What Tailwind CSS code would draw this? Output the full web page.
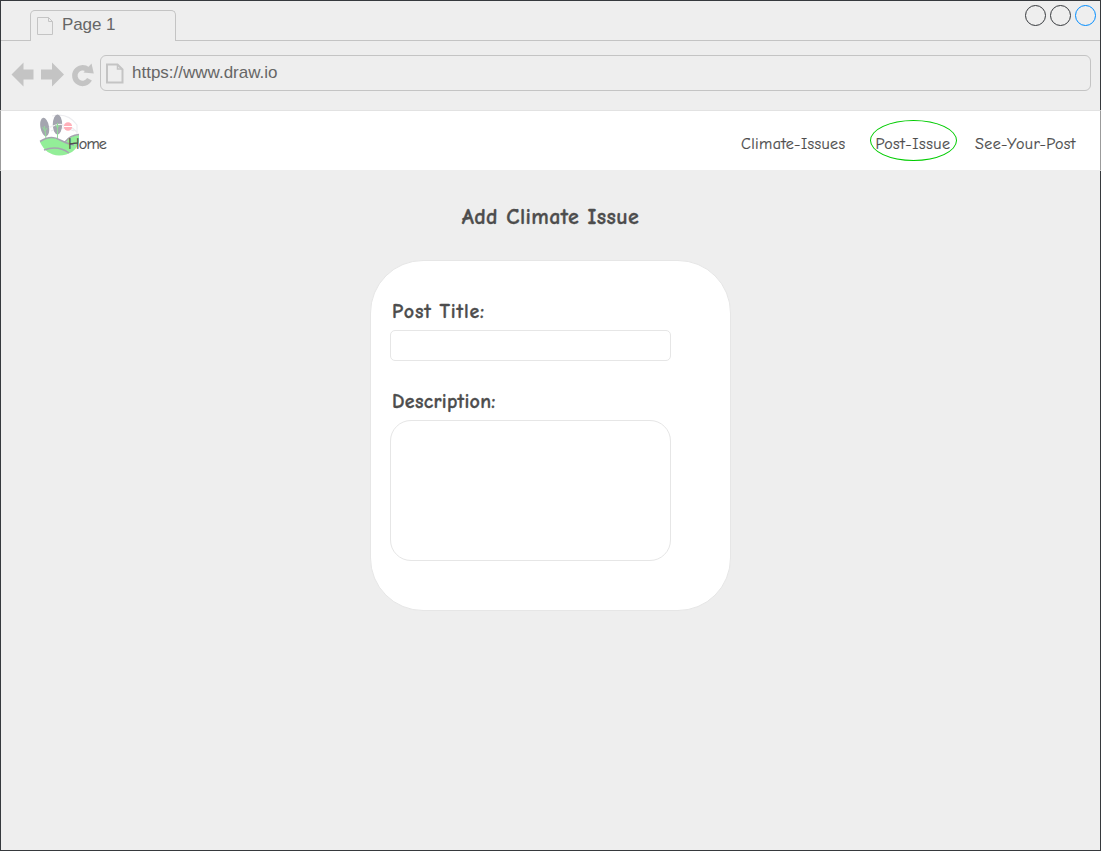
<!DOCTYPE html>
<html lang="en">
<head>
<meta charset="utf-8">
<title>Add Climate Issue</title>
<script src="https://cdn.jsdelivr.net/npm/@tailwindcss/browser@4"></script>
</head>
<body class="w-[1101px] h-[851px] overflow-hidden">
<div class="w-[1101px] h-[851px] bg-[#eeeeee] border border-[#36393d] flex flex-col font-['Liberation_Sans',sans-serif] text-[#666666] text-[17px]">
  <!-- Tab strip -->
  <header class="h-10 shrink-0 border-b border-[#c4c4c4] flex items-end justify-between pl-[29px] pr-1">
    <div class="w-[146px] h-[31px] -mb-px border border-b-0 border-[#c4c4c4] rounded-t-[5px] bg-[#eeeeee] flex pl-[6px]">
      <svg class="w-[17px] h-5 mt-[5px] shrink-0" viewBox="0 0 17 20" fill="none" stroke="#c4c4c4"><path d="M.5 1.500h11l4 4v13H.5zM11.500 1.500v4h4"/></svg>
      <span class="ml-2 mt-[4px] leading-5 tracking-[-0.1px]">Page 1</span>
    </div>
    <div class="flex gap-1 self-start mt-[4px]">
      <span class="size-[21px] rounded-full border border-[#36393d]"></span>
      <span class="size-[21px] rounded-full border border-[#36393d]"></span>
      <span class="size-[21px] rounded-full border border-[#008cff]"></span>
    </div>
  </header>
  <!-- Toolbar -->
  <div class="h-[69px] shrink-0 flex pl-[10px] pr-[9px] pt-[14px]">
    <svg class="w-[83px] h-[26px] mt-[6px] mr-[6px] shrink-0" viewBox="0 0 83 26" fill="#c4c4c4">
      <path d="M0.500 13.500L12.500 1.500V8.500H22.500V18.500H12.500V25.500ZM53 13.500L41 1.500V8.500H30V18.500H41V25.500Z"/>
      <path d="M78.500 18.300A7.800 7.800 0 1 1 76.500 8.500" fill="none" stroke="#c4c4c4" stroke-width="5.500"/>
      <path d="M80.500 2.500L82.800 12.500L72.500 11.500Z"/>
    </svg>
    <div class="flex-1 h-9 border border-[#c4c4c4] rounded-[6px] flex pl-[5px]">
      <svg class="w-[18px] h-[21px] mt-[7px] shrink-0" viewBox="0 0 18 21" fill="none" stroke="#c4c4c4" stroke-width="2"><path d="M1 1.500h10.500l5 5v13H1z"/><path d="M11.500 1.500v4.500h4.500" stroke-width="1.500"/></svg>
      <span class="ml-[8px] mt-[7px] leading-5">https://www.draw.io</span>
    </div>
  </div>
  <!-- Site navigation -->
  <nav class="h-[61px] shrink-0 -mx-px bg-white border border-[#e2e2e2] border-x-[#9b9b9b] border-b-[#eeeeee] flex items-start font-['Comic_Sans_MS','Comic_Neue',Lato,sans-serif] text-[#4d4d4d] text-[16px] leading-5 [-webkit-text-stroke:0.2px]">
    <svg class="w-[42px] h-[44px] ml-[38px] mt-[2px] shrink-0" viewBox="0 0 42 44">
      <g fill="none" stroke="#ededf0" stroke-width="1.200"><path d="M13 3Q29-1 38 12V24"/><path d="M10 14Q28 8 38 19M12 18Q24 12 35 18"/></g>
      <ellipse cx="5.700" cy="14" rx="4.300" ry="9.300" fill="#a4a5af" transform="rotate(-10 5.700 14)"/>
      <ellipse cx="18.500" cy="11.500" rx="4.700" ry="10" fill="#a4a5af"/>
      <path d="M10 15Q19 10 25 12" fill="none" stroke="#f2f2f3" stroke-width="1.200"/>
      <g fill="none" stroke="#93d99a"><path d="M5.500 13L7 26M18.500 10V27M3.500 14L6 18L8 15M16.500 12L18.500 15L20.500 12"/></g>
      <ellipse cx="29" cy="13.500" rx="4.200" ry="4.300" fill="#ffafb9"/>
      <path d="M25 13.500H34" fill="none" stroke="#fff"/>
      <path d="M1 29Q12 21 21 27L27 29Q31 22 40 22V29Q36 42 20 42.500Q7 42 1 29Z" fill="#93ee98"/>
      <path d="M1 28.500Q12 21.500 21 27Q27 30.500 35 32M26 29Q31 22 40 21.500M5 37Q19 32 30 40" fill="none" stroke="#a4a5af" stroke-width="1.500"/>
    </svg>
    <span class="-ml-[13px] mt-[23px] tracking-[-0.8px]">Home</span>
    <span class="ml-auto mt-[23px] w-[106px] tracking-[0.36px] whitespace-nowrap">Climate-Issues</span>
    <span class="ml-[23px] mt-[9px] w-[87px] h-[41px] rounded-[50%] border border-[#00cc00] text-center pt-[13px] pr-px tracking-[0.5px] whitespace-nowrap">Post-Issue</span>
    <span class="ml-[18px] mt-[23px] w-[102px] mr-[23px] tracking-[0.4px] whitespace-nowrap">See-Your-Post</span>
  </nav>
  <!-- Issue form -->
  <main class="flex-1 flex flex-col items-center font-['Comic_Sans_MS','Comic_Neue',Lato,sans-serif] font-bold text-[#4d4d4d] [-webkit-text-stroke:0.3px]">
    <h1 class="mt-[32px] h-7 leading-7 text-[22px] tracking-[0.42px]">Add Climate Issue</h1>
    <form class="mt-[29px] w-[361px] h-[351px] rounded-[53px] bg-white border border-[#e6e6e6] pl-[19px] flex flex-col">
      <label for="title" class="mt-[39px] h-6 leading-6 text-xl ml-[2px] tracking-[0.8px]">Post Title:</label>
      <input id="title" type="text" class="mt-[6px] w-[281px] h-[31px] shrink-0 rounded-[5px] border border-[#e6e6e6]">
      <label for="description" class="mt-[29px] h-6 leading-6 text-xl ml-[2px] tracking-[0.3px]">Description:</label>
      <textarea id="description" class="mt-[6px] w-[281px] h-[141px] shrink-0 rounded-[21px] border border-[#e6e6e6] resize-none"></textarea>
    </form>
  </main>
</div>
</body>
</html>
